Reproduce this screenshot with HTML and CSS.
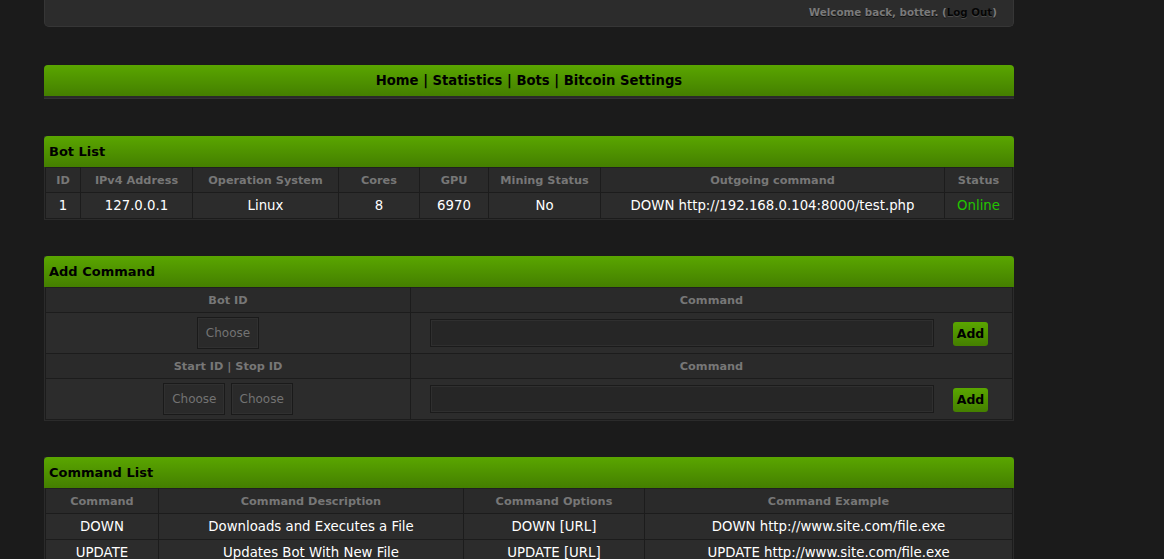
FILE: index.html
```
<!DOCTYPE html>
<html>
<head>
<meta charset="utf-8">
<link rel="stylesheet" href="styles.css">
</head>
<body>
<div class="wrap">
  <div class="topbar">
    <span class="welcome">Welcome back, botter. (<a class="logout">Log Out</a>)</span>
  </div>

  <div class="nav">
    <a>Home</a> | <a>Statistics</a> | <a>Bots</a> | <a>Bitcoin Settings</a>
  </div>

  <div class="panel first">
    <div class="phead">Bot List</div>
    <table class="grid">
      <colgroup>
        <col style="width:35px"><col style="width:112px"><col style="width:146px"><col style="width:81px"><col style="width:69px"><col style="width:112px"><col style="width:344px"><col>
      </colgroup>
      <tr class="th"><td>ID</td><td>IPv4 Address</td><td>Operation System</td><td>Cores</td><td>GPU</td><td>Mining Status</td><td>Outgoing command</td><td>Status</td></tr>
      <tr class="td"><td>1</td><td>127.0.0.1</td><td>Linux</td><td>8</td><td>6970</td><td>No</td><td>DOWN http://192.168.0.104:8000/test.php</td><td class="online">Online</td></tr>
    </table>
  </div>

  <div class="panel">
    <div class="phead">Add Command</div>
    <table class="grid">
      <colgroup><col style="width:365px"><col></colgroup>
      <tr class="th"><td>Bot ID</td><td>Command</td></tr>
      <tr class="form"><td><span class="choose">Choose</span></td><td><div class="cmdrow"><span class="input"></span><span class="add">Add</span></div></td></tr>
      <tr class="th"><td>Start ID | Stop ID</td><td>Command</td></tr>
      <tr class="form"><td><span class="choose">Choose</span> <span class="choose">Choose</span></td><td><div class="cmdrow"><span class="input"></span><span class="add">Add</span></div></td></tr>
    </table>
  </div>

  <div class="panel">
    <div class="phead">Command List</div>
    <table class="grid">
      <colgroup><col style="width:113px"><col style="width:305px"><col style="width:181px"><col></colgroup>
      <tr class="th"><td>Command</td><td>Command Description</td><td>Command Options</td><td>Command Example</td></tr>
      <tr class="td"><td>DOWN</td><td>Downloads and Executes a File</td><td>DOWN [URL]</td><td>DOWN http://www.site.com/file.exe</td></tr>
      <tr class="td"><td>UPDATE</td><td>Updates Bot With New File</td><td>UPDATE [URL]</td><td>UPDATE http://www.site.com/file.exe</td></tr>
    </table>
  </div>
</div>
</body>
</html>
```
FILE: styles.css
```
html, body {
  margin: 0;
  padding: 0;
  background: #1b1b1b;
  overflow: hidden;
}
body {
  font-family: "DejaVu Sans", Verdana, sans-serif;
  color: #fff;
}
.wrap {
  width: 970px;
  margin-left: 44px;
}
.topbar {
  height: 27px;
  background: #2c2c2c;
  border: 1px solid #363636;
  border-top: none;
  border-radius: 0 0 5px 5px;
  box-sizing: border-box;
  display: flex;
  justify-content: flex-end;
  align-items: center;
  padding: 0 16px 2px 0;
}
.welcome {
  font-size: 10.3px;
  font-weight: bold;
  color: #7a7a7a;
  text-shadow: 0 1px 0 #111;
}
.logout {
  color: #050505;
  text-shadow: 0 1px 0 #4a4a4a;
}
.nav {
  margin-top: 38px;
  height: 33px;
  box-sizing: border-box;
  background: linear-gradient(#5aa600, #447f00);
  border-radius: 4px 4px 0 0;
  border-bottom: 2px solid #2a2a2a;
  box-shadow: 0 1px 0 #333;
  text-align: center;
  font-size: 13.2px;
  font-weight: bold;
  color: #000;
  line-height: 32px;
}
.panel {
  margin-top: 36px;
  background: #2b2b2b;
  border: 1px solid #2b2b2b;
  box-sizing: border-box;
}
.panel.first { margin-top: 38px; }
.phead {
  height: 31px;
  background: linear-gradient(#5aa600, #447f00);
  border-radius: 4px 4px 0 0;
  font-size: 13px;
  font-weight: bold;
  color: #000;
  line-height: 31px;
  padding-left: 5px;
  margin: -1px -1px 0 -1px;
}
.grid {
  width: 100%;
  border-collapse: collapse;
  table-layout: fixed;
  background: #2b2b2b;
}
.grid td {
  border: 1px solid #1c1c1c;
  text-align: center;
  padding: 0;
}
.grid tr:first-child td { border-top-color: #202020; }
.th td {
  height: 24px;
  font-size: 11.3px;
  font-weight: bold;
  color: #777;
  background: #2a2a2a;
}
.td td {
  height: 25px;
  font-size: 13.3px;
  color: #fff;
  background: #2c2c2c;
}
.td .online { color: #22c400; }
.form td {
  height: 40px;
  background: #2c2c2c;
}
.choose {
  display: inline-block;
  box-sizing: border-box;
  height: 32px;
  line-height: 30px;
  padding: 0 8px;
  border: 1px solid #1a1a1a;
  background: #2a2a2a;
  color: #737373;
  font-size: 12px;
  box-shadow: inset 0 0 0 1px #303030;
  vertical-align: middle;
}
.cmdrow {
  display: flex;
  align-items: center;
  padding: 0 24px 0 19px;
}
.input {
  flex: 1;
  height: 28px;
  box-sizing: border-box;
  background: #262626;
  border: 1px solid #1b1b1b;
  box-shadow: inset 0 0 0 1px #2f2f2f;
}
.add {
  margin-left: 19px;
  width: 35px;
  height: 24px;
  margin-top: 1px;
  box-sizing: border-box;
  background: linear-gradient(#5aa600, #447f00);
  border-radius: 3px;
  color: #000;
  font-weight: bold;
  font-size: 12.5px;
  line-height: 24px;
  text-align: center;
}
```
